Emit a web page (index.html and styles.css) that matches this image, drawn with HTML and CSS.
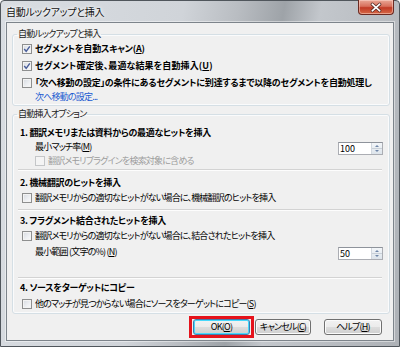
FILE: index.html
```html
<!DOCTYPE html>
<html lang="ja">
<head>
<meta charset="utf-8">
<title>自動ルックアップと挿入</title>
<link rel="stylesheet" href="styles.css">
</head>
<body>
<div class="window">
  <div class="titlebar">
    <span class="title">自動ルックアップと挿入</span>
    <div class="close">
      <svg width="36" height="15" viewBox="0 0 36 15">
        <path d="M14 4 L22 11 M22 4 L14 11" stroke="#5a2b24" stroke-width="3.4" stroke-linecap="round"/>
        <path d="M14 4 L22 11 M22 4 L14 11" stroke="#ffffff" stroke-width="1.8" stroke-linecap="round"/>
      </svg>
    </div>
  </div>
  <div class="client">
    <fieldset class="group g1">
      <legend>自動ルックアップと挿入</legend>
      <div class="row strong">
        <span class="cb checked"><svg width="8" height="8" viewBox="0 0 8 8"><path d="M1.2 4 L3.2 6.3 L6.8 1.3" fill="none" stroke="#4a5e9a" stroke-width="1.4"/></svg></span>
        <span class="lbl">セグメントを自動スキャン(<u>A</u>)</span>
      </div>
      <div class="row strong wide">
        <span class="cb checked"><svg width="8" height="8" viewBox="0 0 8 8"><path d="M1.2 4 L3.2 6.3 L6.8 1.3" fill="none" stroke="#4a5e9a" stroke-width="1.4"/></svg></span>
        <span class="lbl">セグメント確定後、最適な結果を自動挿入(<u>U</u>)</span>
      </div>
      <div class="row strong">
        <span class="cb"></span>
        <span class="lbl">「次へ移動の設定」の条件にあるセグメントに到達するまで以降のセグメントを自動処理し</span>
      </div>
      <div class="linkrow"><span class="link">次へ移動の設定...</span></div>
    </fieldset>

    <fieldset class="group g2">
      <legend>自動挿入オプション</legend>
      <div class="head h1">1. 翻訳メモリまたは資料からの最適なヒットを挿入</div>
      <div class="field f1">
        <span class="flbl">最小マッチ率(<u>M</u>)</span>
        <div class="spin">
          <span class="val">100</span>
          <span class="arrows"><svg width="10" height="11" viewBox="0 0 10 11"><path d="M3 4 L5 2 L7 4 Z" fill="#6f86a8"/><path d="M3 7 L5 9 L7 7 Z" fill="#6f86a8"/><line x1="0" y1="5.5" x2="10" y2="5.5" stroke="#c9d0d8" stroke-width="1"/></svg></span>
        </div>
      </div>
      <div class="row sub disabled">
        <span class="cb"></span>
        <span class="lbl">翻訳メモリプラグインを検索対象に含める</span>
      </div>
      <div class="sep s1"></div>

      <div class="head h2">2. 機械翻訳のヒットを挿入</div>
      <div class="row r2">
        <span class="cb"></span>
        <span class="lbl">翻訳メモリからの適切なヒットがない場合に、機械翻訳のヒットを挿入</span>
      </div>
      <div class="sep s2"></div>

      <div class="head h3">3. フラグメント結合されたヒットを挿入</div>
      <div class="row r3">
        <span class="cb"></span>
        <span class="lbl">翻訳メモリからの適切なヒットがない場合に、結合されたヒットを挿入</span>
      </div>
      <div class="field f2">
        <span class="flbl">最小範囲 (文字の%) (<u>N</u>)</span>
        <div class="spin">
          <span class="val">50</span>
          <span class="arrows"><svg width="10" height="11" viewBox="0 0 10 11"><path d="M3 4 L5 2 L7 4 Z" fill="#6f86a8"/><path d="M3 7 L5 9 L7 7 Z" fill="#6f86a8"/><line x1="0" y1="5.5" x2="10" y2="5.5" stroke="#c9d0d8" stroke-width="1"/></svg></span>
        </div>
      </div>
      <div class="sep s3"></div>

      <div class="head h4">4. ソースをターゲットにコピー</div>
      <div class="row r4">
        <span class="cb"></span>
        <span class="lbl">他のマッチが見つからない場合にソースをターゲットにコピー(<u>S</u>)</span>
      </div>
    </fieldset>

    <div class="buttons">
      <div class="highlight"><button class="btn ok">OK(<u>O</u>)</button></div>
      <button class="btn cancel">キャンセル(<u>C</u>)</button>
      <button class="btn help">ヘルプ(<u>H</u>)</button>
    </div>
  </div>
</div>
</body>
</html>
```

FILE: styles.css
```css
* { box-sizing: border-box; }
html, body { margin: 0; padding: 0; }
body {
  width: 400px;
  height: 347px;
  overflow: hidden;
  font-family: "Noto Sans CJK JP", "Noto Sans", sans-serif;
  font-feature-settings: "palt";
  font-size: 9px;
  letter-spacing: -0.8px;
  color: #000;
}
.window {
  width: 400px;
  height: 347px;
  border: 1px solid #50565c;
  border-radius: 4px 4px 0 0;
  background: linear-gradient(100deg, #d9dde2 0%, #d0d4d9 40%, #b9bdc2 52%, #9ea3a8 62%, #c3c7cc 70%, #b8bcc1 85%, #aeb2b7 100%);
  display: flex;
  flex-direction: column;
}
.titlebar {
  height: 21px;
  flex: none;
  display: flex;
  justify-content: space-between;
  align-items: flex-start;
}
.title {
  margin: 4px 0 0 5px;
  font-size: 10px;
  letter-spacing: -0.3px;
  line-height: 14px;
  color: #111;
  text-shadow: 0 0 5px #fff, 0 0 3px #fff;
}
.close {
  width: 36px;
  height: 15px;
  margin: -1px 5px 0 0;
  border: 1px solid #6b2a22;
  border-top: none;
  border-radius: 0 0 4px 4px;
  background: linear-gradient(#e9a796 0%, #d8705c 45%, #c13a25 55%, #d66a48 100%);
  box-shadow: inset 0 0 0 1px rgba(255,220,210,.5);
  display: flex;
}
.client {
  flex: 1;
  margin: 0 5px 5px 5px;
  border: 1px solid #7d848b;
  box-shadow: 0 0 0 1px rgba(255,255,255,.45);
  background: #f0f0f0;
  padding: 5px 3px 0 5px;
  display: flex;
  flex-direction: column;
}
.group {
  margin: 0;
  min-width: 0;
  border: 1px solid #d5dfe5;
  border-radius: 3px;
  box-shadow: inset 0 0 0 1px #fafbfc;
}
.group legend {
  padding: 0 1px;
  margin-left: 0;
  line-height: 12px;
  color: #1a1a1a;
}
.g1 { padding: 0 4px 0 4px; }
.g2 { padding: 0 6px 3px 4px; margin-top: 2px; }

.row {
  display: flex;
  align-items: center;
  margin-left: 5px;
  white-space: nowrap;
}
.g1 .row { height: 17px; }
.strong { font-size: 9px; font-weight: 700; letter-spacing: -0.2px; }
.strong.wide { letter-spacing: 0.1px; }
.cb {
  flex: none;
  width: 10px;
  height: 10px;
  margin-right: 3px;
  border: 1px solid #8e8f8f;
  background: linear-gradient(135deg, #d6dae0 0%, #eef0f3 60%, #fafafa 100%);
  box-shadow: inset 0 0 0 1px #f3f3f3;
  display: flex;
  align-items: center;
  justify-content: center;
}
.lbl { line-height: 12px; }
u { text-decoration: underline; text-underline-offset: 1px; }

.linkrow { height: 14px; margin-left: 18px; line-height: 12px; }
.link { color: #1a5bd0; }

.head {
  margin-left: 3px;
  line-height: 14px;
  height: 14px;
  font-size: 9px;
  font-weight: 700;
  letter-spacing: -0.3px;
  white-space: nowrap;
}
.h1 { margin-top: 6px; }
.h2 { margin-top: 5px; }
.h3 { margin-top: 3px; }
.h4 { margin-top: 2px; }

.field {
  display: flex;
  justify-content: space-between;
  align-items: flex-start;
  margin-left: 18px;
  height: 14px;
}
.f1 { margin-top: 1px; }
.f2 { margin-top: 4px; }
.flbl { line-height: 12px; }
.spin {
  margin-top: 1px;
  width: 45px;
  height: 13px;
  border: 1px solid #abadb3;
  border-top-color: #8e939b;
  background: #fff;
  display: flex;
}
.val { flex: 1; line-height: 11px; padding-left: 1px; font-size: 9px; letter-spacing: 0; }
.arrows {
  width: 11px;
  height: 11px;
  border-left: 1px solid #d2d8df;
  background: linear-gradient(#f3f6f9, #dde4eb);
  display: flex;
}

.sub { margin-left: 18px; height: 12px; }
.disabled { color: #9d9d9d; }
.disabled .cb { border-color: #c4c6c8; background: #f4f4f4; box-shadow: none; }
.r2, .r3, .r4 { height: 13px; }
.r2 { margin-top: 1px; }
.r3 { margin-top: 1px; }
.r4 { margin-top: 2px; }

.sep {
  height: 2px;
  margin: 0 1px;
  border-top: 1px solid #d3d3d3;
  border-bottom: 1px solid #fdfdfd;
}
.s1 { margin-top: 2px; }
.s2 { margin-top: 5px; }
.s3 { margin-top: 17px; }

.buttons {
  margin-top: 2px;
  height: 22px;
  display: flex;
  justify-content: flex-end;
  align-items: center;
  padding-right: 8px;
}
.highlight {
  border: 3px solid #e5131c;
  padding: 0 1px;
  height: 22px;
  display: flex;
  align-items: center;
  margin-right: 1px;
}
.btn {
  font-family: inherit;
  font-feature-settings: "palt";
  font-size: 9px;
  letter-spacing: -0.8px;
  height: 16px;
  line-height: 12px;
  padding: 0;
  white-space: nowrap;
  color: #000;
  border: 1px solid #707070;
  border-radius: 3px;
  background: linear-gradient(#f2f2f2 0%, #ebebeb 50%, #dddddd 51%, #cfcfcf 100%);
  box-shadow: inset 0 0 0 1px #fbfbfb;
}
.ok { width: 57px; border-color: #3c7fb1; box-shadow: inset 0 0 0 1px #48d8fb; }
.cancel { width: 56px; }
.help { width: 58px; margin-left: 13px; }
```
